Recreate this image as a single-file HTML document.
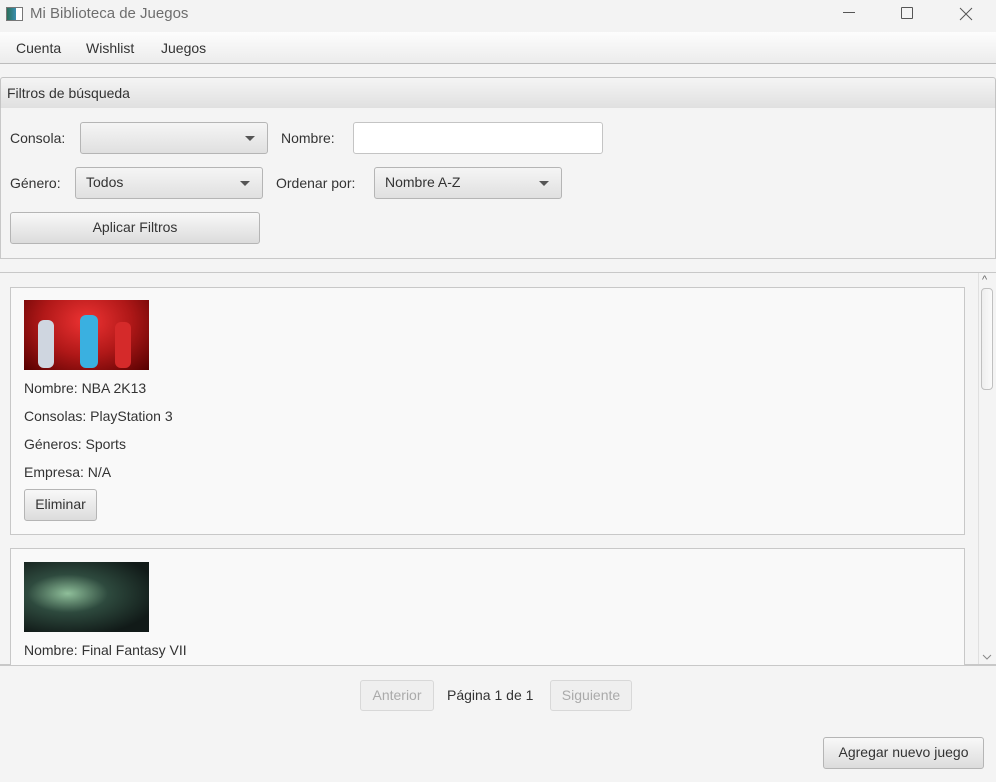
<!DOCTYPE html>
<html><head><meta charset="utf-8"><style>
*{box-sizing:border-box;margin:0;padding:0}
body{width:996px;height:782px;background:#f4f4f4;font-family:"Liberation Sans",sans-serif;font-size:14px;color:#333;position:relative;overflow:hidden}
.a{position:absolute}
.t{position:absolute;white-space:nowrap;line-height:16px}
.btn{position:absolute;border:1px solid #b5b5b5;border-radius:3px;background:linear-gradient(#f8f8f8,#dcdcdc);text-align:center;line-height:29px;color:#333}
.dis{border-color:#d8d8d8;background:#efefef;color:#aaa}
.combo{position:absolute;border:1px solid #b5b5b5;border-radius:3px;background:linear-gradient(#f5f5f5,#e0e0e0);line-height:29px;padding-left:10px}
.combo:after{content:"";position:absolute;right:12px;top:13px;border-left:5px solid transparent;border-right:5px solid transparent;border-top:5px solid #555}
.card{position:absolute;left:10px;width:955px;border:1px solid #c8c8c8;background:#f9f9f9}
</style></head><body>
<div class="a" style="left:0;top:0;width:996px;height:32px;background:#f3f3f3"></div>
<div class="a" style="left:6px;top:7px;width:17px;height:14px;border:1px solid #777;background:linear-gradient(90deg,#2a6f5a,#3b8fb0 60%,#fff 60%)"></div>
<div class="t" style="left:30px;top:6px;color:#6e6e6e;font-size:15px">Mi Biblioteca de Juegos</div>
<div class="a" style="left:843px;top:12px;width:12px;height:1px;background:#555"></div>
<div class="a" style="left:901px;top:7px;width:12px;height:12px;border:1px solid #555;border-radius:1px"></div>
<svg class="a" style="left:959px;top:7px" width="14" height="14"><path d="M1 1L13 13M13 1L1 13" stroke="#555" stroke-width="1"/></svg>
<div class="a" style="left:0;top:32px;width:996px;height:32px;background:linear-gradient(#fdfdfd,#ececec);border-bottom:1px solid #bcbcbc"></div>
<div class="t" style="left:16px;top:40px">Cuenta</div>
<div class="t" style="left:86px;top:40px">Wishlist</div>
<div class="t" style="left:161px;top:40px">Juegos</div>
<div class="a" style="left:0;top:77px;width:996px;height:32px;background:linear-gradient(#f4f4f4,#e0e0e0);border:1px solid #c4c4c4;border-radius:3px 3px 0 0"></div>
<div class="t" style="left:7px;top:85px">Filtros de búsqueda</div>
<div class="a" style="left:0;top:108px;width:996px;height:151px;border:1px solid #c8c8c8;border-top:none;background:#f4f4f4"></div>
<div class="t" style="left:10px;top:130px">Consola:</div>
<div class="combo" style="left:80px;top:122px;width:188px;height:32px"></div>
<div class="t" style="left:281px;top:130px">Nombre:</div>
<div class="a" style="left:353px;top:122px;width:250px;height:32px;border:1px solid #c4c4c4;border-radius:3px;background:#fff"></div>
<div class="t" style="left:10px;top:175px">Género:</div>
<div class="combo" style="left:75px;top:167px;width:188px;height:32px">Todos</div>
<div class="t" style="left:276px;top:175px">Ordenar por:</div>
<div class="combo" style="left:374px;top:167px;width:188px;height:32px">Nombre A-Z</div>
<div class="btn" style="left:10px;top:212px;width:250px;height:32px">Aplicar Filtros</div>
<div class="a" style="left:0;top:272px;width:996px;height:393px;border-top:1px solid #c8c8c8;border-bottom:1px solid #c8c8c8;background:#f4f4f4"></div>
<div class="a" style="left:978px;top:273px;width:18px;height:391px;background:#f4f4f4;border-left:1px solid #e0e0e0"></div>
<div class="t" style="left:982px;top:272px;color:#666;font-size:11px">&#94;</div>
<div class="a" style="left:981px;top:288px;width:12px;height:102px;border:1px solid #c0c0c0;border-radius:4px;background:linear-gradient(90deg,#eee,#fafafa)"></div>
<svg class="a" style="left:982px;top:654px" width="10" height="6"><path d="M1 1L5 5L9 1" stroke="#888" fill="none"/></svg>
<div class="card" style="top:287px;height:248px"></div>
<div class="a" style="left:24px;top:300px;width:125px;height:70px;background:radial-gradient(ellipse at 50% 30%,#e33 0%,#b01818 50%,#500 100%)"></div>
<div class="a" style="left:38px;top:320px;width:16px;height:48px;background:#cfd6e0;border-radius:6px"></div>
<div class="a" style="left:80px;top:315px;width:18px;height:53px;background:#3ab0e0;border-radius:6px"></div>
<div class="a" style="left:115px;top:322px;width:16px;height:46px;background:#d52a2a;border-radius:6px"></div>
<div class="t" style="left:24px;top:380px">Nombre: NBA 2K13</div>
<div class="t" style="left:24px;top:408px">Consolas: PlayStation 3</div>
<div class="t" style="left:24px;top:436px">Géneros: Sports</div>
<div class="t" style="left:24px;top:464px">Empresa: N/A</div>
<div class="btn" style="left:24px;top:489px;width:73px;height:32px">Eliminar</div>
<div class="card" style="top:548px;height:118px;border-bottom:none"></div>
<div class="a" style="left:24px;top:562px;width:125px;height:70px;background:radial-gradient(ellipse at 35% 45%,#8fbf9a 0%,#2e4a3e 35%,#111a18 80%)"></div>
<div class="t" style="left:24px;top:642px">Nombre: Final Fantasy VII</div>
<div class="a" style="left:0;top:665px;width:996px;height:1px;background:#c8c8c8"></div>
<div class="btn dis" style="left:360px;top:680px;width:74px;height:31px">Anterior</div>
<div class="t" style="left:447px;top:687px">Página 1 de 1</div>
<div class="btn dis" style="left:550px;top:680px;width:82px;height:31px">Siguiente</div>
<div class="btn" style="left:823px;top:737px;width:161px;height:32px">Agregar nuevo juego</div>
</body></html>
